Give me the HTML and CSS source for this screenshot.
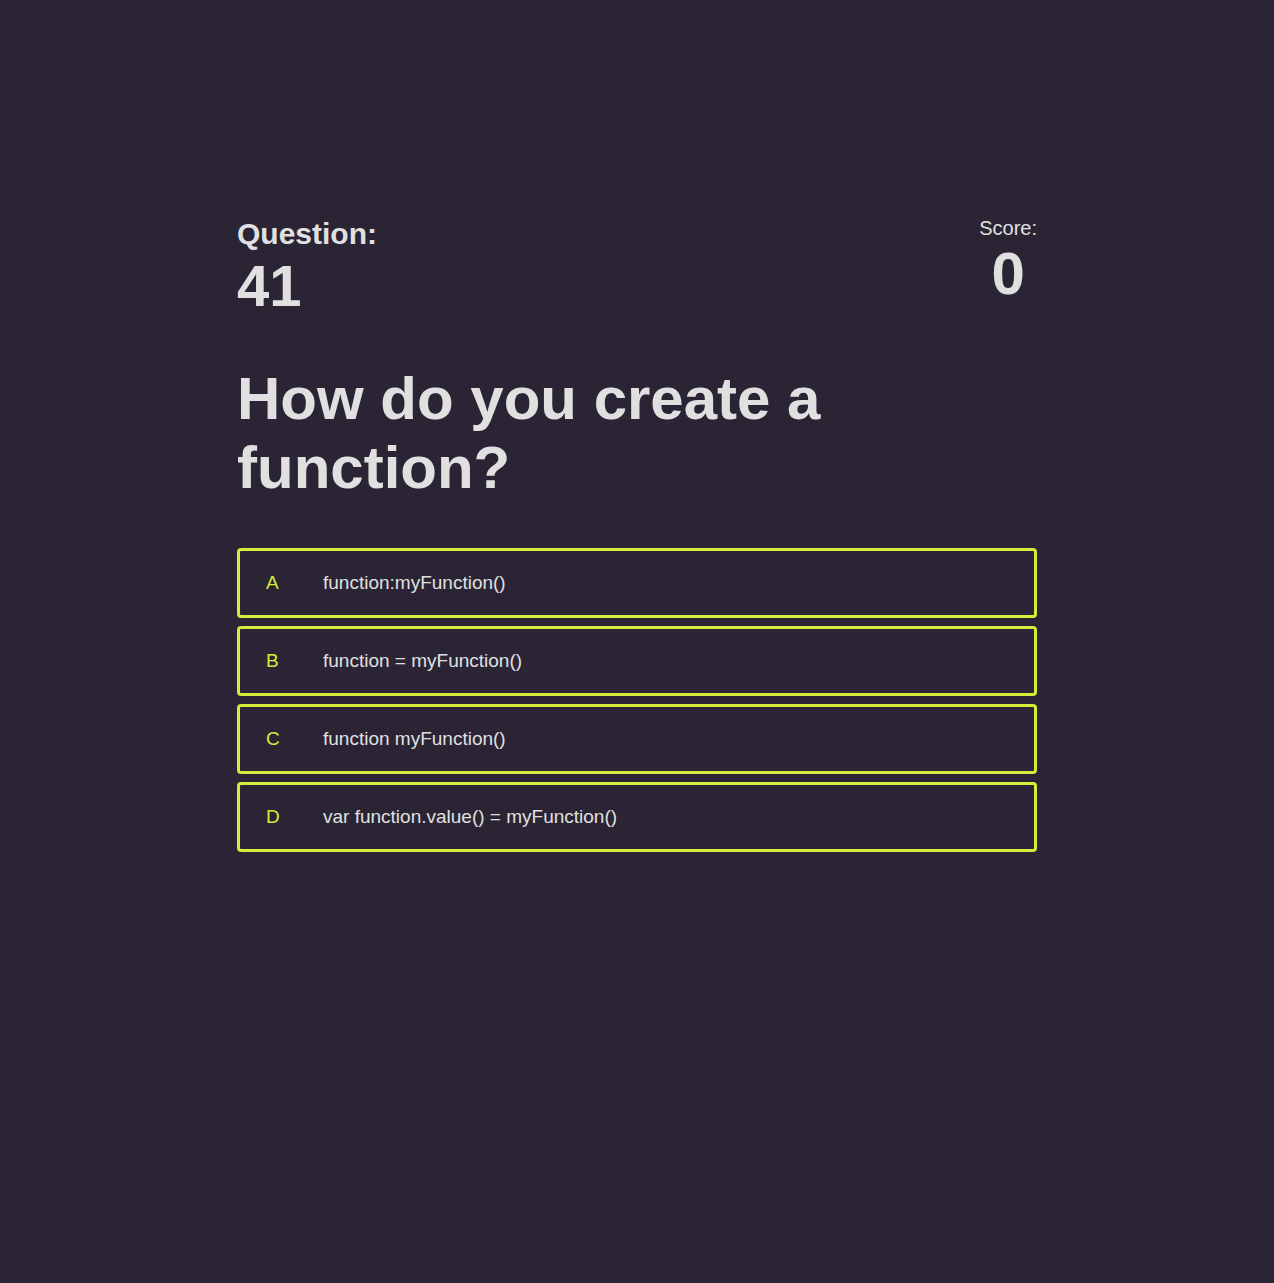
FILE: index.html
```html
<!DOCTYPE html>
<html lang="en">
<head>
<meta charset="utf-8">
<title>Quiz</title>
<link rel="stylesheet" href="styles.css">
</head>
<body>
<main class="quiz">
  <header class="hud">
    <div class="hud-item">
      <p class="hud-label">Question:</p>
      <p class="hud-value">41</p>
    </div>
    <div class="hud-item hud-right">
      <p class="score-label">Score:</p>
      <p class="score-value">0</p>
    </div>
  </header>
  <h1 class="question">How do you create a function?</h1>
  <div class="choices">
    <div class="choice"><span class="prefix">A</span><span class="text">function:myFunction()</span></div>
    <div class="choice"><span class="prefix">B</span><span class="text">function = myFunction()</span></div>
    <div class="choice"><span class="prefix">C</span><span class="text">function myFunction()</span></div>
    <div class="choice"><span class="prefix">D</span><span class="text">var function.value() = myFunction()</span></div>
  </div>
</main>
</body>
</html>
```

FILE: styles.css
```css
html, body {
  margin: 0;
  padding: 0;
}
body {
  background: #2a2435;
  color: #e0e0e0;
  font-family: "Liberation Sans", Arial, sans-serif;
  min-height: 1283px;
}
.quiz {
  width: 800px;
  margin: 0 auto;
  padding-top: 214px;
}
.hud {
  display: flex;
  justify-content: space-between;
  align-items: flex-start;
}
.hud-item p { margin: 0; }
.hud-label {
  font-size: 30px;
  font-weight: 700;
  line-height: 40px;
}
.hud-value {
  font-size: 58px;
  font-weight: 700;
  line-height: 64px;
}
.hud-right {
  text-align: center;
}
.score-label {
  font-size: 20px;
  line-height: 28px;
}
.score-value {
  font-size: 60px;
  font-weight: 700;
  line-height: 64px;
}
.question {
  margin: 46px 0 0;
  width: 600px;
  font-size: 60px;
  font-weight: 700;
  line-height: 69px;
}
.choices {
  margin-top: 46px;
  display: flex;
  flex-direction: column;
  gap: 8px;
}
.choice {
  display: flex;
  align-items: center;
  height: 64px;
  border: 3px solid #d8ea3a;
  border-radius: 4px;
  font-size: 19px;
}
.prefix {
  color: #d8ea3a;
  width: 57px;
  padding-left: 26px;
}
.text {
  color: #e0e0e0;
}
```
